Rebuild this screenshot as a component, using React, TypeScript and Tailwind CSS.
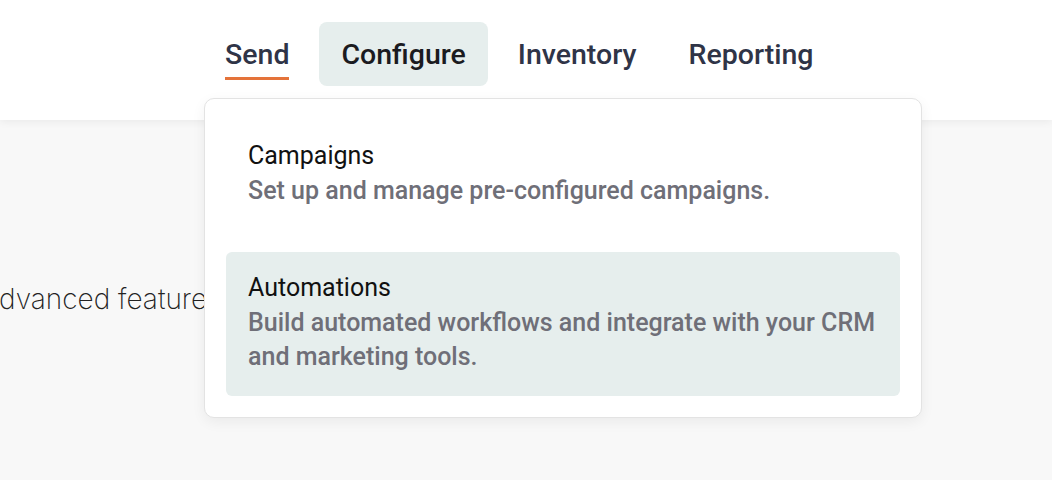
import React from 'react'

const navItems = ['Send', 'Configure', 'Inventory', 'Reporting']

const menuItems = [
  { title: 'Campaigns', desc: 'Set up and manage pre-configured campaigns.', active: false },
  { title: 'Automations', desc: 'Build automated workflows and integrate with your CRM and marketing tools.', active: true },
]

export default function App() {
  return (
    <div className="relative h-[480px] w-[1052px] overflow-hidden bg-[#f8f8f8] font-['Roboto',sans-serif]">
      {/* Header */}
      <header className="relative z-10 h-[120px] bg-white shadow-[0_2px_8px_rgba(0,0,0,0.06)]">
        <nav className="flex items-start gap-[8px] pl-[203px] pt-[22px]">
          {navItems.map((item) => (
            <div key={item} className="relative">
              <button
                className={
                  item === 'Configure'
                    ? 'h-[64px] rounded-[8px] bg-[#e6eeed] px-[22px] pt-[2px] text-[28.5px] font-medium text-[#1b1b1f]'
                    : 'h-[64px] rounded-[8px] px-[22px] pt-[2px] text-[28.5px] font-medium text-[#2f3447]'
                }
              >
                {item}
              </button>
              {item === 'Send' && (
                <span className="absolute bottom-[6px] left-[22px] right-[22px] h-[3px] bg-[#e4733a]" />
              )}
            </div>
          ))}
        </nav>
      </header>

      {/* Page content behind the menu */}
      <div className="pt-[158px]">
        <p className="-ml-[19px] whitespace-nowrap font-['Inter',sans-serif] text-[28px] font-extralight text-[#222]">
          Advanced features
        </p>
      </div>

      {/* Dropdown */}
      <div className="absolute left-[204px] top-[98px] z-20 flex w-[718px] flex-col gap-[22px] rounded-[10px] border border-[#e3e3e3] bg-white p-[21px] shadow-[0_4px_14px_rgba(0,0,0,0.06)]">
        {menuItems.map((m) => (
          <div
            key={m.title}
            className={m.active ? 'rounded-[6px] bg-[#e6eeed] px-[22px] py-[22px]' : 'rounded-[6px] px-[22px] py-[22px]'}
          >
            <div className="text-[25px] leading-[28px] text-[#111]">{m.title}</div>
            <div className="mt-[4px] text-[25px] font-medium leading-[34px] text-[#6f6f78]">{m.desc}</div>
          </div>
        ))}
      </div>
    </div>
  )
}
